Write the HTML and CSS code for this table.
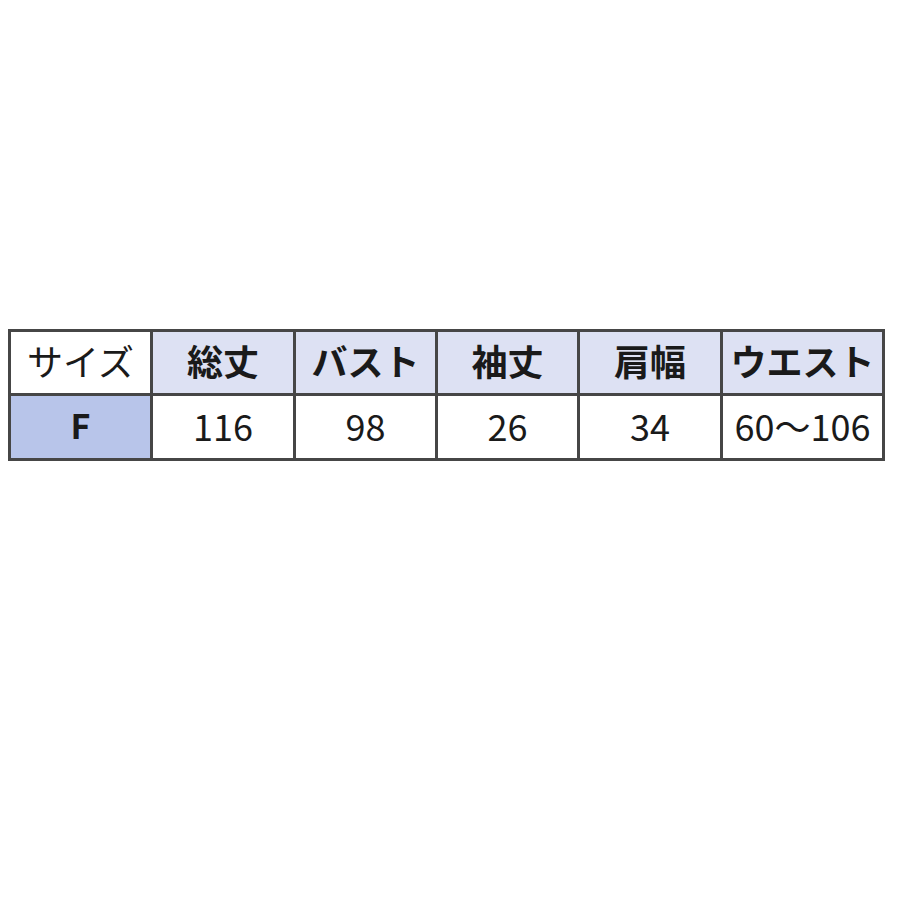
FILE: index.html
```html
<!DOCTYPE html>
<html lang="ja">
<head>
<meta charset="utf-8">
<link rel="stylesheet" href="styles.css">
</head>
<body>
<div class="page">
  <div class="size-table">
    <div class="cell head plain">サイズ</div>
    <div class="cell head">総丈</div>
    <div class="cell head">バスト</div>
    <div class="cell head">袖丈</div>
    <div class="cell head">肩幅</div>
    <div class="cell head">ウエスト</div>
    <div class="cell label">F</div>
    <div class="cell">116</div>
    <div class="cell">98</div>
    <div class="cell">26</div>
    <div class="cell">34</div>
    <div class="cell">60〜106</div>
  </div>
</div>
</body>
</html>
```

FILE: styles.css
```css
html, body {
  margin: 0;
  padding: 0;
  background: #ffffff;
}
.page {
  padding: 329px 0 0 8px;
}
.size-table {
  display: grid;
  grid-template-columns: 139px 140px 139px 139px 140px 159px;
  grid-template-rows: 61px 62px;
  gap: 3px;
  padding: 3px;
  width: max-content;
  background: #464646;
  font-family: "Noto Sans CJK JP", sans-serif;
  color: #1a1a1a;
}
.cell {
  background: #ffffff;
  display: flex;
  align-items: center;
  justify-content: center;
  font-size: 36px;
  line-height: 1;
  padding-bottom: 5px;
}
.head {
  background: #dde1f3;
  font-weight: 700;
}
.head.plain {
  background: #ffffff;
  font-weight: 400;
}
.label {
  background: #b8c5ea;
  font-weight: 700;
  font-size: 34px;
}
```
